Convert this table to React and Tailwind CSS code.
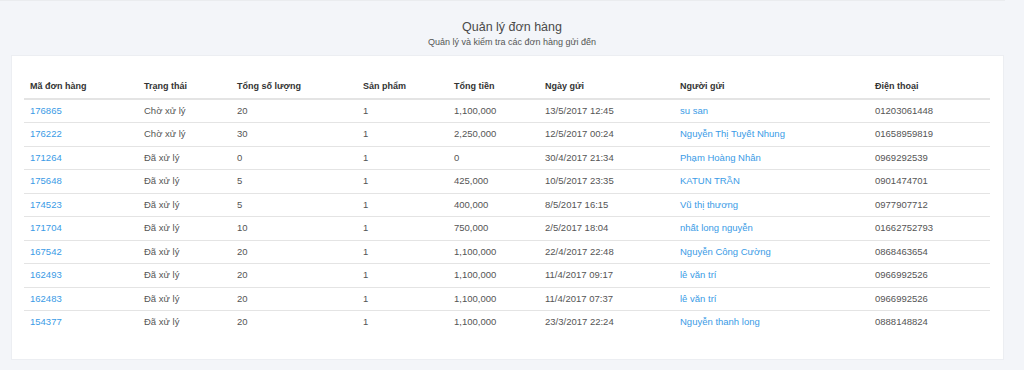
import React from "react";

const orders = [
  ["176865", "Chờ xử lý", "20", "1", "1,100,000", "13/5/2017 12:45", "su san", "01203061448"],
  ["176222", "Chờ xử lý", "30", "1", "2,250,000", "12/5/2017 00:24", "Nguyễn Thị Tuyết Nhung", "01658959819"],
  ["171264", "Đã xử lý", "0", "1", "0", "30/4/2017 21:34", "Phạm Hoàng Nhân", "0969292539"],
  ["175648", "Đã xử lý", "5", "1", "425,000", "10/5/2017 23:35", "KATUN TRẦN", "0901474701"],
  ["174523", "Đã xử lý", "5", "1", "400,000", "8/5/2017 16:15", "Vũ thị thương", "0977907712"],
  ["171704", "Đã xử lý", "10", "1", "750,000", "2/5/2017 18:04", "nhất long nguyễn", "01662752793"],
  ["167542", "Đã xử lý", "20", "1", "1,100,000", "22/4/2017 22:48", "Nguyễn Công Cường", "0868463654"],
  ["162493", "Đã xử lý", "20", "1", "1,100,000", "11/4/2017 09:17", "lê văn trí", "0966992526"],
  ["162483", "Đã xử lý", "20", "1", "1,100,000", "11/4/2017 07:37", "lê văn trí", "0966992526"],
  ["154377", "Đã xử lý", "20", "1", "1,100,000", "23/3/2017 22:24", "Nguyễn thanh long", "0888148824"],
];

const headers = [
  ["Mã đơn hàng", "w-[114px]"],
  ["Trạng thái", "w-[93px]"],
  ["Tổng số lượng", "w-[126px]"],
  ["Sản phẩm", "w-[91px]"],
  ["Tổng tiền", "w-[91px]"],
  ["Ngày gửi", "w-[135px]"],
  ["Người gửi", "w-[195px]"],
  ["Điện thoại", "w-[121px]"],
];

export default function App() {
  return (
    <div
      className="w-[1024px] h-[370px] bg-[#f3f5f9] text-[#555] overflow-hidden"
      style={{ fontFamily: '"Liberation Sans", Arial, sans-serif' }}
    >
      <div className="w-[1005px] h-[1px] bg-[#eaecef]" />
      <div className="flex flex-col items-center pt-[18px]">
        <h1 className="text-[12.5px] leading-[17px] text-[#4a4a4a]">Quản lý đơn hàng</h1>
        <p className="text-[9px] leading-[14px] text-[#555] -mt-[1px]">Quản lý và kiểm tra các đơn hàng gửi đến</p>
      </div>
      <div className="mx-[11px] mt-[6px] w-[993px] h-[305px] bg-white border border-[#eceef2] pt-[20px] px-[12px]">
        <table className="table-fixed w-[966px] border-collapse text-[9.5px]">
          <thead>
            <tr>
              {headers.map(([label, w]) => (
                <th
                  key={label}
                  className={`${w} h-[23px] pl-[6px] text-left text-[9px] font-bold text-[#333] border-b-2 border-[#e4e4e4]`}
                >
                  {label}
                </th>
              ))}
            </tr>
          </thead>
          <tbody>
            {orders.map((row, i) => (
              <tr key={row[0]} className={i > 0 ? "border-t border-[#e4e4e4]" : ""}>
                {row.map((cell, j) => (
                  <td
                    key={j}
                    className={`h-[23.5px] pl-[6px] whitespace-nowrap ${
                      j === 0 || j === 6 ? "text-[#3a9be6]" : "text-[#555]"
                    }`}
                  >
                    {cell}
                  </td>
                ))}
              </tr>
            ))}
          </tbody>
        </table>
      </div>
    </div>
  );
}
